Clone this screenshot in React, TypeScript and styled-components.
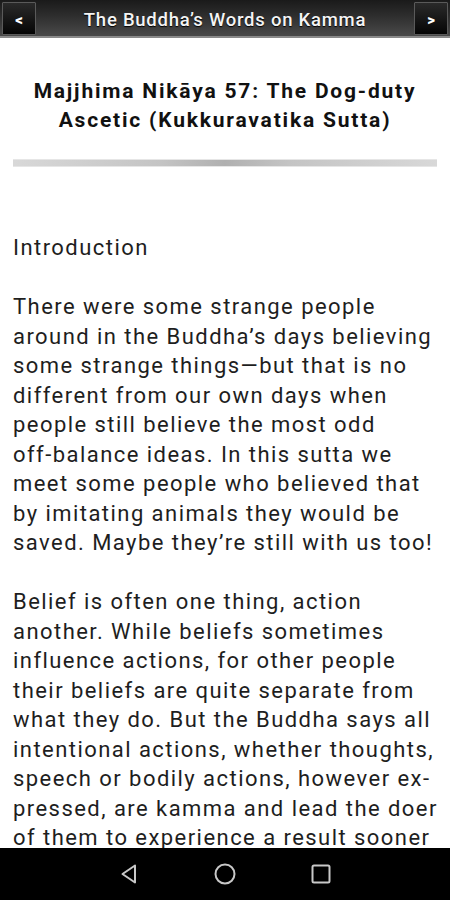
import React from "react";
import styled, { createGlobalStyle } from "styled-components";

const Global = createGlobalStyle`
  html, body { margin: 0; padding: 0; background: #fff; }
  body { width: 450px; height: 900px; overflow: hidden; font-family: Roboto, "Noto Sans", Arial, sans-serif; }
  #root { height: 900px; }
`;

const Screen = styled.div`
  height: 900px;
  display: flex;
  flex-direction: column;
  background: #fff;
`;

const TopBar = styled.header`
  height: 38px;
  flex: 0 0 38px;
  display: flex;
  align-items: stretch;
  background: linear-gradient(#1a1a1a, #2e2e2e 45%, #4a4a4a);
  border-bottom: 2px solid #8a8a8a;
  padding: 2px 2px 0 2px;
  box-sizing: border-box;
`;

const NavButton = styled.button`
  width: 34px;
  flex: 0 0 34px;
  margin-bottom: 1px;
  border: 1px solid #5a5a5a;
  border-radius: 1px;
  background: linear-gradient(#2a2a2a, #050505);
  color: #fff;
  font-family: Roboto, Arial, sans-serif;
  font-weight: 900;
  font-size: 15px;
  display: flex;
  align-items: center;
  justify-content: center;
  padding: 0;
  padding-top: 2px;
`;

const BarTitle = styled.div`
  flex: 1;
  display: flex;
  align-items: center;
  justify-content: center;
  color: #f4f4f4;
  font-size: 18.5px;
  font-weight: 500;
  letter-spacing: 0.75px;
  text-shadow: 0 1px 1px #000;
  padding-top: 1px;
  white-space: nowrap;
`;

const Content = styled.main`
  flex: 1;
  overflow: hidden;
  padding: 39px 13px 0 13px;
  color: #1c1c1c;
`;

const Heading = styled.h1`
  margin: 0;
  text-align: center;
  font-size: 21px;
  font-weight: 700;
  line-height: 29px;
  letter-spacing: 1.8px;
  color: #111;
`;

const Line = styled.span`
  display: block;
  white-space: nowrap;
`;

const Rule = styled.div`
  margin: 24px 0 0 0;
  height: 6px;
  background: linear-gradient(90deg, #d8d8d8, #c4c4c4 35%, #b0b0b0 50%, #c4c4c4 65%, #d8d8d8);
  border-top: 1px solid #e6e6e6;
  border-bottom: 1px solid #e6e6e6;
`;

const Body = styled.div`
  margin-top: 66px;
  font-size: 22px;
  line-height: 29.5px;
  letter-spacing: 1.45px;
  color: #1e1e1e;
`;

const Para = styled.p`
  margin: 0 0 29.5px 0;
`;

const BottomNav = styled.nav`
  height: 52px;
  flex: 0 0 52px;
  background: #000;
  display: flex;
  justify-content: center;
  align-items: center;
  gap: 72px;
`;

const SysIcon = styled.svg`
  width: 24px;
  height: 24px;
  fill: none;
  stroke: #c8c8c8;
  stroke-width: 2;
`;

const p1 = [
  "There were some strange people",
  "around in the Buddha’s days believing",
  "some strange things—but that is no",
  "different from our own days when",
  "people still believe the most odd",
  "off-balance ideas. In this sutta we",
  "meet some people who believed that",
  "by imitating animals they would be",
  "saved. Maybe they’re still with us too!",
];

const p2 = [
  "Belief is often one thing, action",
  "another. While beliefs sometimes",
  "influence actions, for other people",
  "their beliefs are quite separate from",
  "what they do. But the Buddha says all",
  "intentional actions, whether thoughts,",
  "speech or bodily actions, however ex-",
  "pressed, are kamma and lead the doer",
  "of them to experience a result sooner",
];

export default function App() {
  return (
    <Screen>
      <Global />
      <TopBar>
        <NavButton>&lt;</NavButton>
        <BarTitle>The Buddha’s Words on Kamma</BarTitle>
        <NavButton>&gt;</NavButton>
      </TopBar>
      <Content>
        <Heading>
          <Line>Majjhima Nikāya 57: The Dog-duty</Line>
          <Line>Ascetic (Kukkuravatika Sutta)</Line>
        </Heading>
        <Rule />
        <Body>
          <Para>Introduction</Para>
          <Para>
            {p1.map((l) => (
              <Line key={l}>{l}</Line>
            ))}
          </Para>
          <Para>
            {p2.map((l) => (
              <Line key={l}>{l}</Line>
            ))}
          </Para>
        </Body>
      </Content>
      <BottomNav>
        <SysIcon viewBox="0 0 24 24">
          <path d="M18 3.5 L5.5 12 L18 20.5 Z" strokeLinejoin="round" />
        </SysIcon>
        <SysIcon viewBox="0 0 24 24">
          <circle cx="12" cy="12" r="9.5" />
        </SysIcon>
        <SysIcon viewBox="0 0 24 24">
          <rect x="3.5" y="3.5" width="17" height="17" rx="1.5" />
        </SysIcon>
      </BottomNav>
    </Screen>
  );
}
